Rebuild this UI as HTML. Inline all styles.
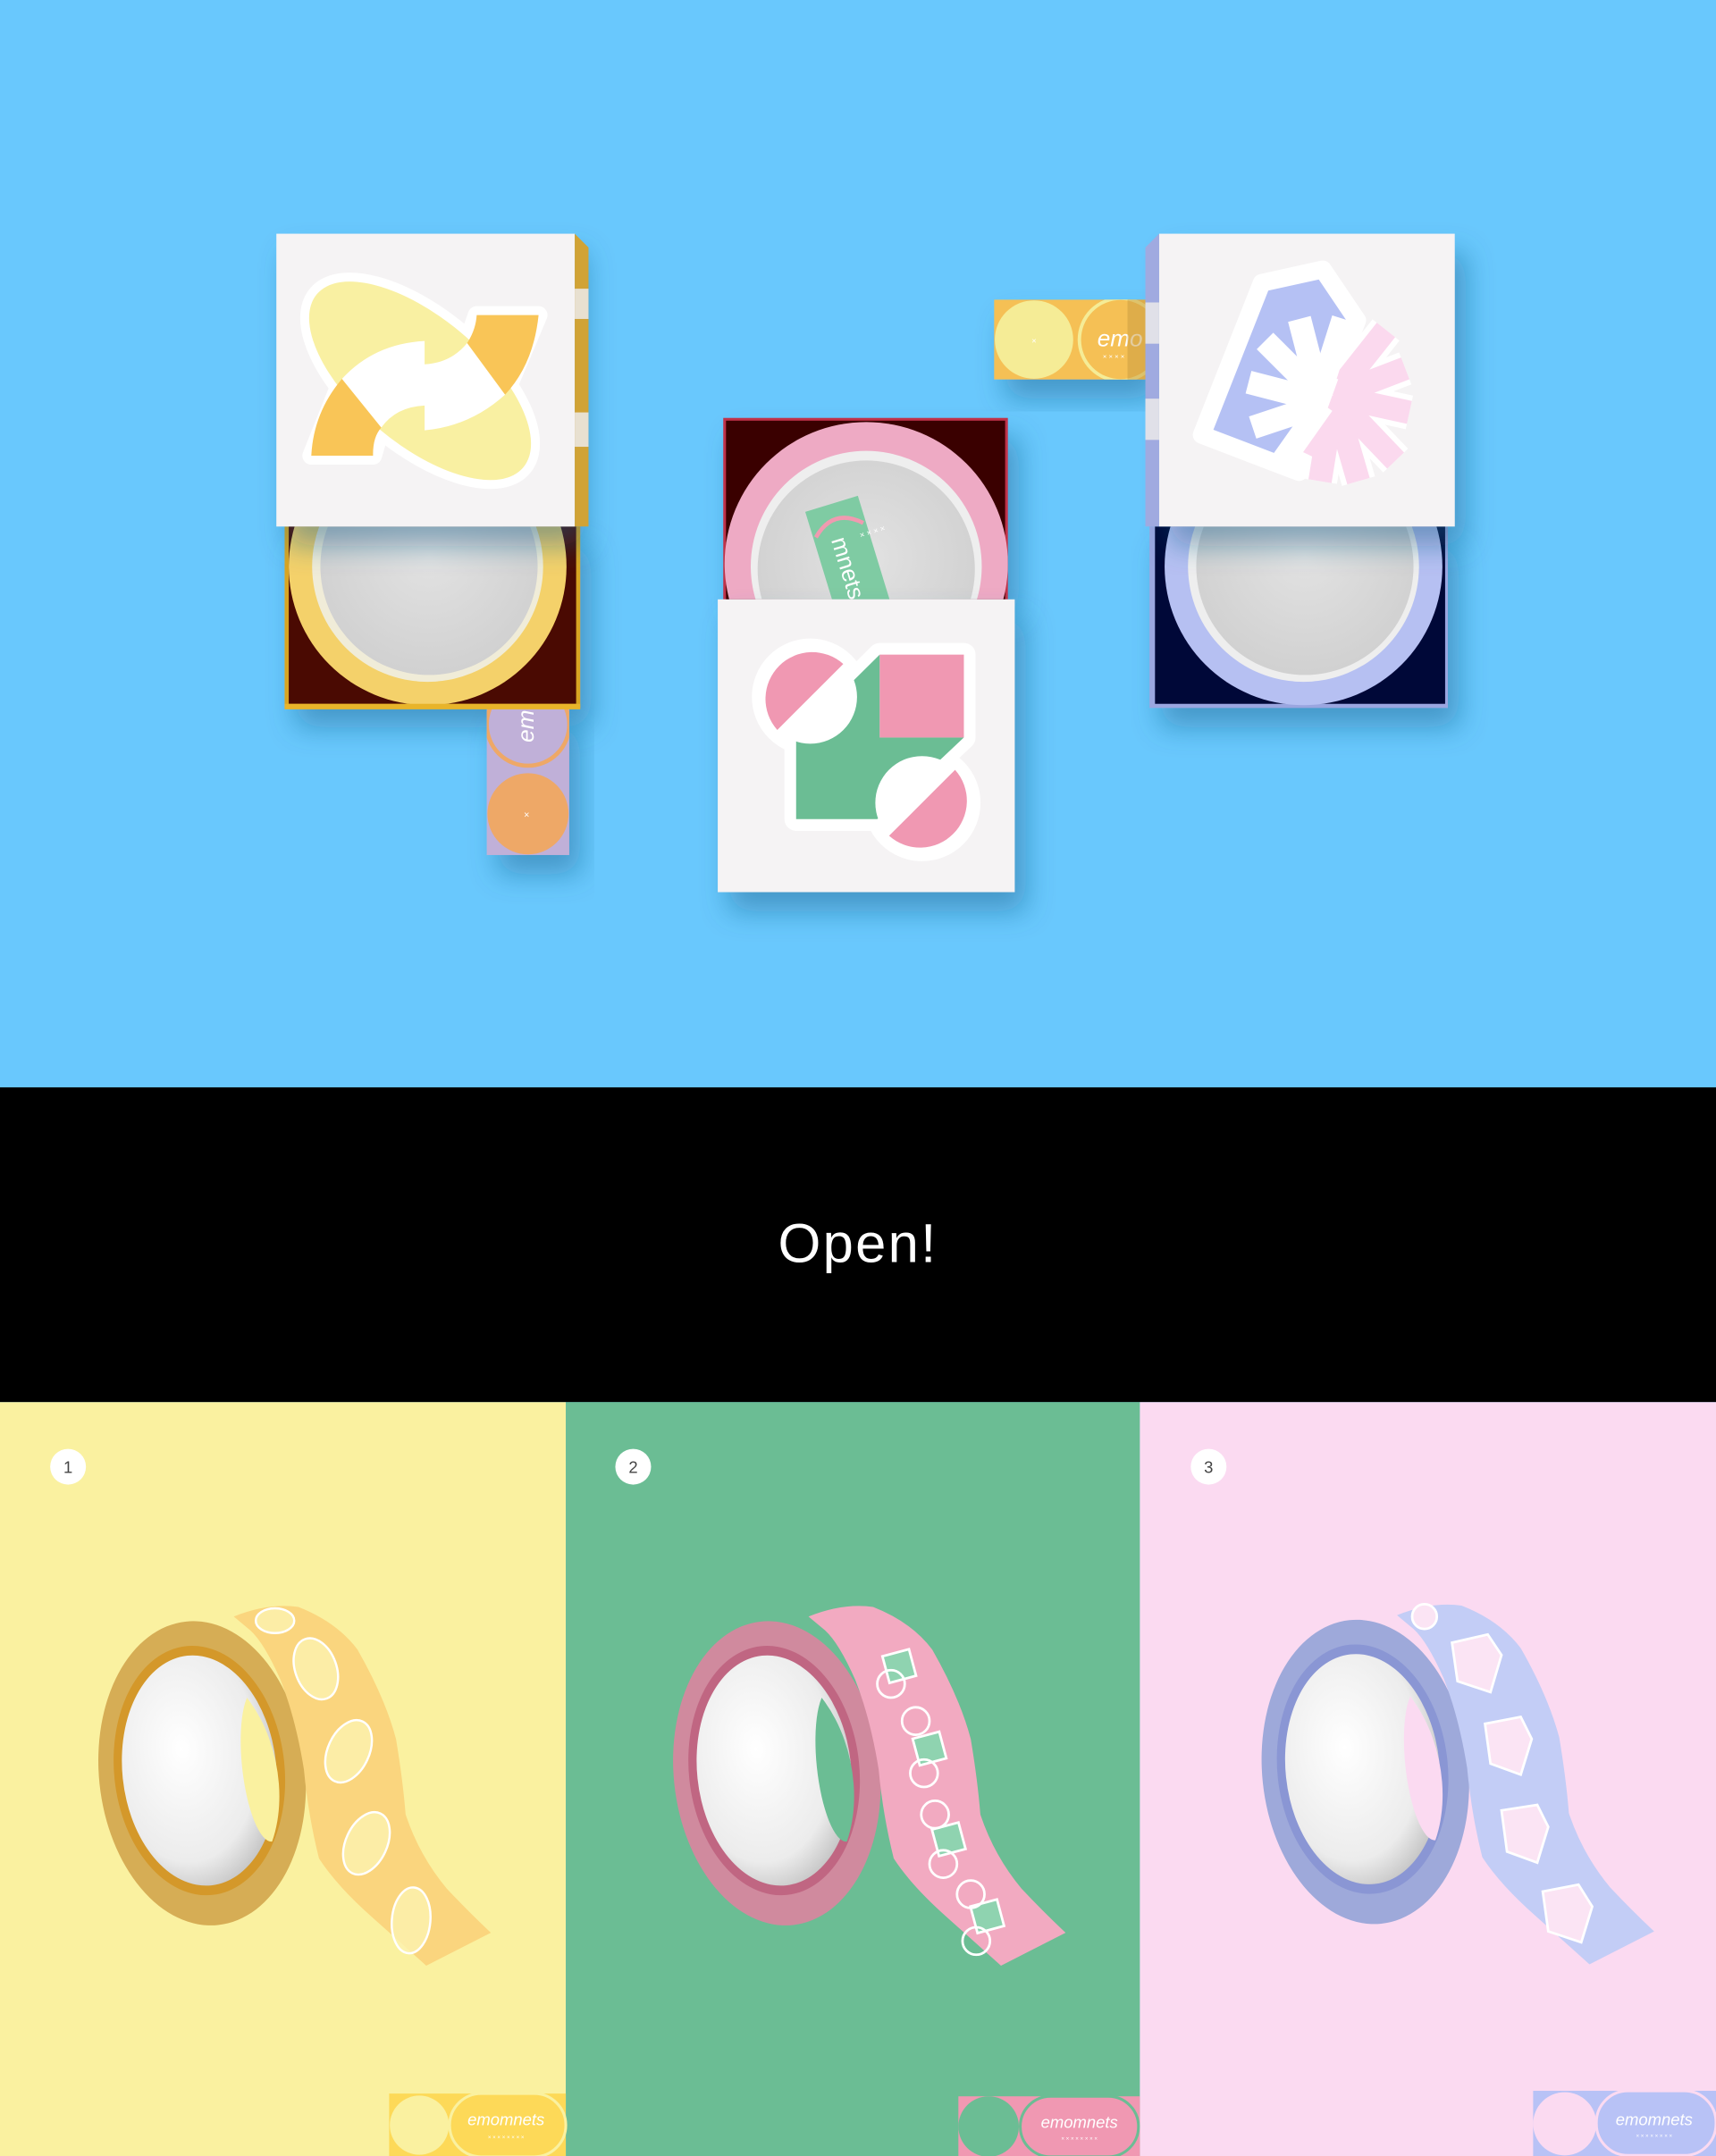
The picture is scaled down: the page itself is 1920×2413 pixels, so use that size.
<!DOCTYPE html>
<html><head><meta charset="utf-8"><style>
html,body{margin:0;padding:0;background:#69c8fd;}
svg{display:block;}
text{font-family:"Liberation Sans",sans-serif;}
</style></head><body>
<svg width="1920" height="2413" viewBox="0 0 1248 1568.4" xmlns="http://www.w3.org/2000/svg">
<defs>
<filter id="sh" x="-30%" y="-30%" width="160%" height="170%"><feDropShadow dx="8" dy="14" stdDeviation="10" flood-color="#1b5f8a" flood-opacity="0.45"/></filter>
<radialGradient id="hole" cx="0.4" cy="0.4" r="0.7"><stop offset="0" stop-color="#ffffff"/><stop offset="0.7" stop-color="#ececec"/><stop offset="1" stop-color="#b8b8b8"/></radialGradient>
<radialGradient id="grey" cx="0.5" cy="0.45" r="0.6"><stop offset="0" stop-color="#e2e2e2"/><stop offset="1" stop-color="#cfcfcf"/></radialGradient>
<clipPath id="c1"><rect x="207" y="383" width="215" height="132"/></clipPath>
<clipPath id="c2"><rect x="526" y="304" width="207" height="132"/></clipPath>
<clipPath id="c3"><rect x="836" y="383" width="217" height="132"/></clipPath>
<clipPath id="tab3"><rect x="723" y="218" width="110" height="58"/></clipPath>
<clipPath id="tab1"><rect x="354" y="515" width="60" height="107"/></clipPath>
<clipPath id="holeclip"><ellipse cx="145" cy="1288" rx="56" ry="84" transform="rotate(-6 145 1288)"/></clipPath>
</defs>

<rect x="0" y="0" width="1248" height="791" fill="#69c8fd"/>
<rect x="0" y="791" width="1248" height="229" fill="#000"/>
<rect x="0" y="1020" width="411.5" height="549" fill="#faf1a0"/>
<rect x="411.5" y="1020" width="417.5" height="549" fill="#6bbd94"/>
<rect x="829" y="1020" width="419" height="549" fill="#fbdaf1"/>

<!-- BOX 1 -->
<g filter="url(#sh)"><rect x="207" y="383" width="215" height="132" fill="#d9a520"/></g>
<rect x="210" y="383" width="209" height="129" fill="#4a0a02"/>
<g clip-path="url(#c1)">
<circle cx="311" cy="412" r="101" fill="#f4d16a"/>
<circle cx="311" cy="412" r="84" fill="#f0ecd8"/>
<circle cx="312" cy="412" r="79" fill="url(#grey)"/>
</g>
<g filter="url(#sh)"><rect x="354" y="515" width="60" height="107" fill="#c0b0d8"/></g>
<g clip-path="url(#tab1)">
<circle cx="384" cy="527" r="30" fill="none" stroke="#eea867" stroke-width="3"/>
<circle cx="384" cy="592" r="29.5" fill="#eea867"/>
<text x="381" y="547" font-size="17" font-style="italic" fill="#fff" transform="rotate(-90 381 540)">emo</text>
<text x="383" y="595" font-size="7" fill="#fff" text-anchor="middle">×</text>
</g>
<rect x="207" y="512" width="215" height="4" fill="#e8b42a"/>
<g filter="url(#sh)"><rect x="201" y="170" width="217" height="213" fill="#f5f3f4"/></g>
<polygon points="418,170 428,180 428,383 418,383" fill="#d1a336"/>
<rect x="418" y="210" width="10" height="22" fill="#e8e0d0"/>
<rect x="418" y="300" width="10" height="25" fill="#e8e0d0"/>
<g stroke="#fff" stroke-width="13" stroke-linejoin="round">
<ellipse cx="305.5" cy="277" rx="98" ry="46" transform="rotate(40 305.5 277)" fill="#fff"/>
<polygon points="346.7,229.2 391.7,229.2 367.3,287.1 339.7,249.6" fill="#fff"/>
<polygon points="226.4,331.5 271.3,331.5 277.3,311 248.7,275.6" fill="#fff"/>
</g>
<ellipse cx="305.5" cy="277" rx="98" ry="46" transform="rotate(40 305.5 277)" fill="#f9f0a2"/>
<path d="M346.7,229.2 L391.7,229.2 Q388,265 367.3,287.1 L339.7,249.6 Q346,240 346.7,229.2Z" fill="#f9c557"/>
<path d="M226.4,331.5 L271.3,331.5 Q271,318 277.3,311 L248.7,275.6 Q228,300 226.4,331.5Z" fill="#f9c557"/>
<path d="M248.7,275.6 Q272,250 308.8,248 L308.8,265 Q328,264 339.7,249.6 L367.3,287.1 Q342,310 308.8,313 L308.8,295 Q288,296 277.3,311 Z" fill="#fff"/>

<!-- BOX 2 -->
<g filter="url(#sh)"><rect x="526" y="304" width="207" height="132" fill="#c0304a"/></g>
<rect x="528" y="306" width="203" height="130" fill="#3a0000"/>
<g clip-path="url(#c2)">
<circle cx="630" cy="410" r="103" fill="#eeaac4"/>
<circle cx="630" cy="412" r="84" fill="#eee"/>
<circle cx="630" cy="414" r="79" fill="url(#grey)"/>
<g transform="rotate(-17 615 400)">
<rect x="595" y="365" width="40" height="85" fill="#7fcba3"/>
<path d="M597,385 Q615,368 633,385" fill="none" stroke="#f09ab0" stroke-width="3"/>
<text x="607" y="390" font-size="17" fill="#fff" transform="rotate(90 607 390)">mnets</text>
<text x="628" y="395" font-size="6" fill="#fff">× × × ×</text>
</g>
</g>
<g filter="url(#sh)"><rect x="522" y="436" width="216" height="213" fill="#f5f3f4"/></g>
<g stroke="#fff" stroke-width="17" stroke-linejoin="round" fill="#fff">
<circle cx="589.3" cy="507" r="34"/>
<circle cx="670.6" cy="584" r="34"/>
<polygon points="579,536.3 621.8,494 639.8,476.2 701,476.2 701,536.5 638,595.9 579,595.9"/>
</g>
<polygon points="579,536.3 639.8,476.2 639.8,536.5 701,536.5 638,595.9 579,595.9" fill="#6bbd94"/>
<rect x="639.8" y="476.2" width="61.2" height="60.3" fill="#f098b2"/>
<circle cx="589.3" cy="507" r="34" fill="#fff"/>
<path d="M565.3,531 A34,34 0 0 1 613.3,483 Z" fill="#f098b2"/>
<circle cx="670.6" cy="584" r="34" fill="#fff"/>
<path d="M694.6,560 A34,34 0 0 1 646.6,608 Z" fill="#f098b2"/>

<!-- BOX 3 -->
<g filter="url(#sh)"><rect x="836" y="383" width="217" height="132" fill="#9aa6e0"/></g>
<rect x="840" y="383" width="211" height="129" fill="#000838"/>
<g clip-path="url(#c3)">
<circle cx="948" cy="412" r="101" fill="#b6c0f2"/>
<circle cx="948" cy="412" r="84" fill="#eee"/>
<circle cx="949" cy="412" r="79" fill="url(#grey)"/>
</g>
<g filter="url(#sh)"><rect x="723" y="218" width="110" height="58" fill="#f5c055"/></g>
<g clip-path="url(#tab3)">
<circle cx="752" cy="247" r="28.5" fill="#f5ec96"/>
<circle cx="815" cy="247" r="30" fill="#f5c055" stroke="#f5ec96" stroke-width="2.5"/>
<text x="798" y="252" font-size="17" font-style="italic" fill="#fff">emo</text>
<text x="802" y="261" font-size="5" fill="#fff">× × × ×</text>
<text x="752" y="250" font-size="6" fill="#fff" text-anchor="middle">×</text>
</g>
<rect x="820" y="218" width="13" height="58" fill="#c89a40" opacity="0.5"/>
<g filter="url(#sh)"><rect x="843" y="170" width="215" height="213" fill="#f5f3f4"/></g>
<polygon points="833,180 843,170 843,383 833,383" fill="#a0aae0"/>
<rect x="833" y="220" width="10" height="30" fill="#e0e0e8"/>
<rect x="833" y="290" width="10" height="30" fill="#e0e0e8"/>
<polygon points="917.6,205.8 962,196 987,233 944.7,343.4 874,316.3" fill="#b5c1f4" stroke="#fff" stroke-width="13" stroke-linejoin="round"/>
<g stroke="#fff" stroke-width="25">
<line x1="970" y1="288" x2="1022" y2="268"/>
<line x1="970" y1="288" x2="1025" y2="300"/>
<line x1="970" y1="288" x2="1015" y2="335"/>
<line x1="970" y1="288" x2="988" y2="350"/>
<line x1="970" y1="288" x2="960" y2="350"/>
<line x1="970" y1="288" x2="1008" y2="240"/>
</g>
<g stroke="#fbd9ee" stroke-width="17">
<line x1="970" y1="288" x2="1022" y2="268"/>
<line x1="970" y1="288" x2="1025" y2="300"/>
<line x1="970" y1="288" x2="1015" y2="335"/>
<line x1="970" y1="288" x2="988" y2="350"/>
<line x1="970" y1="288" x2="960" y2="350"/>
<line x1="970" y1="288" x2="1008" y2="240"/>
<line x1="970" y1="288" x2="950" y2="330"/>
</g>
<g stroke="#fff" stroke-width="17">
<line x1="960" y1="290" x2="945" y2="232"/>
<line x1="962" y1="290" x2="920" y2="248"/>
<line x1="962" y1="292" x2="908" y2="278"/>
<line x1="962" y1="294" x2="911" y2="311"/>
<line x1="962" y1="294" x2="933" y2="335"/>
<line x1="958" y1="292" x2="977" y2="232"/>
</g>
<rect x="951" y="272" width="18" height="28" fill="#fff" transform="rotate(20 960 286)"/>

<text x="624" y="918" font-size="40" fill="#fff" text-anchor="middle" letter-spacing="1.5">Open!</text>

<circle cx="49.5" cy="1067" r="13" fill="#fff"/><text x="49.5" y="1071.5" font-size="12" fill="#444" text-anchor="middle">1</text>
<circle cx="460.5" cy="1067" r="13" fill="#fff"/><text x="460.5" y="1071.5" font-size="12" fill="#444" text-anchor="middle">2</text>
<circle cx="879" cy="1067" r="13" fill="#fff"/><text x="879" y="1071.5" font-size="12" fill="#444" text-anchor="middle">3</text>

<!-- tape 1 -->
<g>
<ellipse cx="147" cy="1290" rx="75" ry="111" transform="rotate(-6 147 1290)" fill="#d6ad55"/>
<ellipse cx="145" cy="1288" rx="62" ry="91" transform="rotate(-6 145 1288)" fill="#d4982a"/>
<ellipse cx="145" cy="1288" rx="56" ry="84" transform="rotate(-6 145 1288)" fill="url(#hole)"/>
<ellipse cx="192" cy="1284" rx="16" ry="56" transform="rotate(-6 192 1284)" fill="#faf1a0" clip-path="url(#holeclip)"/>
<path d="M170,1176 Q195,1166 217,1169 Q245,1180 260,1200 Q280,1235 288,1265 Q293,1295 295,1320 Q305,1350 325,1374 Q342,1392 357,1406 L310,1430 Q290,1412 271,1395 Q245,1372 232,1352 Q224,1320 221,1287 Q215,1250 204,1222 Q192,1195 182,1186 Z" fill="#fad57e"/>
<g fill="#fdf3b0" fill-opacity="0.8" stroke="#fff" stroke-width="1.6">
<ellipse cx="229.7" cy="1214" rx="15" ry="23" transform="rotate(-20 229.7 1214)"/>
<ellipse cx="253.5" cy="1274" rx="15" ry="24" transform="rotate(25 253.5 1274)"/>
<ellipse cx="266.5" cy="1341" rx="15" ry="24" transform="rotate(25 266.5 1341)"/>
<ellipse cx="299" cy="1397" rx="14" ry="24" transform="rotate(5 299 1397)"/>
<ellipse cx="200" cy="1179" rx="14" ry="9"/>
</g>
</g>
<!-- tape 2 -->
<g transform="translate(418,0)">
<ellipse cx="147" cy="1290" rx="75" ry="111" transform="rotate(-6 147 1290)" fill="#d08a9e"/>
<ellipse cx="145" cy="1288" rx="62" ry="91" transform="rotate(-6 145 1288)" fill="#c06682"/>
<ellipse cx="145" cy="1288" rx="56" ry="84" transform="rotate(-6 145 1288)" fill="url(#hole)"/>
<ellipse cx="192" cy="1284" rx="16" ry="56" transform="rotate(-6 192 1284)" fill="#6bbd94" clip-path="url(#holeclip)"/>
<path d="M170,1176 Q195,1166 217,1169 Q245,1180 260,1200 Q280,1235 288,1265 Q293,1295 295,1320 Q305,1350 325,1374 Q342,1392 357,1406 L310,1430 Q290,1412 271,1395 Q245,1372 232,1352 Q224,1320 221,1287 Q215,1250 204,1222 Q192,1195 182,1186 Z" fill="#f2aac1"/>
<g stroke="#fff" stroke-width="1.8">
<rect x="226" y="1202" width="20" height="20" fill="#8fd3b0" transform="rotate(-15 236 1212)"/><circle cx="230" cy="1225" r="10" fill="none"/>
<rect x="248" y="1262" width="20" height="20" fill="#8fd3b0" transform="rotate(-15 258 1272)"/><circle cx="248" cy="1252" r="10" fill="none"/><circle cx="254" cy="1290" r="10" fill="none"/>
<rect x="262" y="1328" width="20" height="20" fill="#8fd3b0" transform="rotate(-15 272 1338)"/><circle cx="262" cy="1320" r="10" fill="none"/><circle cx="268" cy="1356" r="10" fill="none"/>
<rect x="290" y="1384" width="20" height="20" fill="#8fd3b0" transform="rotate(-15 300 1394)"/><circle cx="288" cy="1378" r="10" fill="none"/><circle cx="292" cy="1412" r="10" fill="none"/>
</g>
</g>
<!-- tape 3 -->
<g transform="translate(846,-1)">
<ellipse cx="147" cy="1290" rx="75" ry="111" transform="rotate(-6 147 1290)" fill="#9ea9da"/>
<ellipse cx="145" cy="1288" rx="62" ry="91" transform="rotate(-6 145 1288)" fill="#8a96d4"/>
<ellipse cx="145" cy="1288" rx="56" ry="84" transform="rotate(-6 145 1288)" fill="url(#hole)"/>
<ellipse cx="192" cy="1284" rx="16" ry="56" transform="rotate(-6 192 1284)" fill="#fbdaf1" clip-path="url(#holeclip)"/>
<path d="M170,1176 Q195,1166 217,1169 Q245,1180 260,1200 Q280,1235 288,1265 Q293,1295 295,1320 Q305,1350 325,1374 Q342,1392 357,1406 L310,1430 Q290,1412 271,1395 Q245,1372 232,1352 Q224,1320 221,1287 Q215,1250 204,1222 Q192,1195 182,1186 Z" fill="#c3cdf6"/>
<g stroke="#fff" stroke-width="1.8" fill="#fbe4f4">
<polygon points="210,1196 236,1190 246,1205 238,1232 214,1224"/>
<polygon points="234,1255 260,1250 268,1266 260,1292 238,1284"/>
<polygon points="246,1318 272,1314 280,1330 272,1356 250,1348"/>
<polygon points="276,1377 302,1372 312,1388 304,1414 280,1406"/>
<circle cx="190" cy="1177" r="9"/>
</g>
</g>

<rect x="283" y="1523" width="128.5" height="46" fill="#fdd958"/>
<circle cx="305" cy="1546" r="21.5" fill="#faf1a0"/>
<rect x="327" y="1523" width="84.5" height="46" rx="23" fill="#fdd958" stroke="#faf1a0" stroke-width="2"/>
<text x="368" y="1546" font-size="12" font-style="italic" fill="#fff" text-anchor="middle">emomnets</text>
<text x="368" y="1556" font-size="4" fill="#fff" text-anchor="middle">× × × × × × × ×</text>

<rect x="697" y="1525" width="132" height="44" fill="#f098b2"/>
<circle cx="719" cy="1547" r="22" fill="#6bbd94"/>
<rect x="742" y="1525" width="86" height="44" rx="22" fill="#f098b2" stroke="#6bbd94" stroke-width="2"/>
<text x="785" y="1548" font-size="12" font-style="italic" fill="#fff" text-anchor="middle">emomnets</text>
<text x="785" y="1557" font-size="4" fill="#fff" text-anchor="middle">× × × × × × × ×</text>

<rect x="1115" y="1521" width="133" height="48" fill="#b8c2f6"/>
<circle cx="1138" cy="1545" r="23" fill="#fbdaf1"/>
<rect x="1161" y="1521" width="87" height="47" rx="23" fill="#b8c2f6" stroke="#fbdaf1" stroke-width="2"/>
<text x="1203" y="1546" font-size="12" font-style="italic" fill="#fff" text-anchor="middle">emomnets</text>
<text x="1203" y="1555" font-size="4" fill="#fff" text-anchor="middle">× × × × × × × ×</text>
</svg>
</body></html>
